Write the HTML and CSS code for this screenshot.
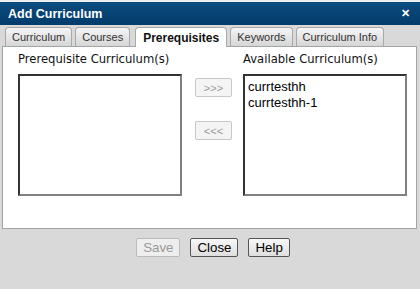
FILE: index.html
```html
<!DOCTYPE html>
<html lang="en">
<head>
    <meta charset="UTF-8">
    <title>Add Curriculum</title>
    <link rel="stylesheet" href="styles.css">
</head>
<body>
    <div class="backdrop"></div>
    <div class="dialog">
        <div class="titlebar">
            <span class="title">Add Curriculum</span>
            <span class="close-x">&#x2715;</span>
        </div>

        <div class="tabs">
            <div class="tab">Curriculum</div>
            <div class="tab">Courses</div>
            <div class="tab active">Prerequisites</div>
            <div class="tab">Keywords</div>
            <div class="tab">Curriculum Info</div>
        </div>

        <div class="panel">
            <div class="column">
                <div class="label">Prerequisite Curriculum(s)</div>
                <div class="listbox"></div>
            </div>
            <div class="movers">
                <button class="move">&gt;&gt;&gt;</button>
                <button class="move">&lt;&lt;&lt;</button>
            </div>
            <div class="column">
                <div class="label">Available Curriculum(s)</div>
                <div class="listbox">
                    <div class="item">currtesthh</div>
                    <div class="item">currtesthh-1</div>
                </div>
            </div>
        </div>

        <div class="actions">
            <button class="btn" disabled>Save</button>
            <button class="btn">Close</button>
            <button class="btn">Help</button>
        </div>
    </div>
</body>
</html>
```

FILE: styles.css
```css
body {
    margin: 0;
    padding: 0;
    width: 420px;
    height: 289px;
    overflow: hidden;
    background-color: #d9d9d9;
    font-family: "Liberation Sans", Arial, sans-serif;
}
.backdrop {
    height: 2px;
    background-color: #eeeeee;
}
.titlebar {
    height: 23px;
    display: flex;
    align-items: center;
    justify-content: space-between;
    padding: 0 10px 0 8px;
    background: linear-gradient(#0c4b7d, #023c6b);
    color: white;
}
.title {
    font-weight: bold;
    font-size: 12.5px;
}
.close-x {
    font-weight: bold;
    font-size: 11px;
}
.tabs {
    display: flex;
    align-items: flex-end;
    height: 20px;
    margin-top: 1px;
    padding-left: 5px;
    gap: 3px;
}
.tab {
    height: 18px;
    line-height: 18px;
    padding: 0 6px;
    font-size: 11px;
    color: #333;
    border: 1px solid #a8a8a8;
    border-bottom: none;
    border-radius: 4px 4px 0 0;
    background: linear-gradient(#f5f5f5, #d6d6d6);
}
.tab.active {
    height: 19px;
    line-height: 20px;
    margin: 0 0 0 2px;
    padding: 0 7px;
    font-size: 12px;
    font-weight: bold;
    color: #111;
    background: white;
    position: relative;
    top: 1px;
}
.panel {
    display: flex;
    height: 177px;
    margin: 0 3px 0 2px;
    padding: 4px 0 0 15px;
    background-color: white;
    border: 1px solid #a0a6a6;
}
.column {
    width: 164px;
}
.label {
    font-family: "DejaVu Sans", Verdana, sans-serif;
    font-size: 11.6px;
    line-height: 16px;
    color: #111;
    margin-bottom: 7px;
}
.listbox {
    box-sizing: border-box;
    height: 122px;
    padding: 3px 3px;
    border: 2px solid;
    border-color: #333 #808080 #808080 #333;
}
.item {
    font-size: 13px;
    line-height: 16px;
    color: #000;
}
.movers {
    display: flex;
    flex-direction: column;
    gap: 24px;
    margin: 27px 11px 0 13px;
}
.move {
    width: 37px;
    height: 19px;
    padding: 0;
    font-family: "Liberation Sans", Arial, sans-serif;
    font-size: 11px;
    color: #999;
    background-color: #f4f4f4;
    border: 1px solid #c8c8c8;
    border-radius: 2px;
}
.actions {
    display: flex;
    justify-content: center;
    gap: 10px;
    padding: 9px 0 0 6px;
}
.btn {
    height: 19px;
    padding: 0 6px;
    font-family: "Liberation Sans", Arial, sans-serif;
    font-size: 13.3px;
    color: #000;
    background: linear-gradient(#f8f8f8, #dedede);
    border: 1px solid #555;
    border-radius: 2px;
}
.btn:disabled {
    color: #999;
    background: #eeeeee;
    border-color: #bbbbbb;
}
```
